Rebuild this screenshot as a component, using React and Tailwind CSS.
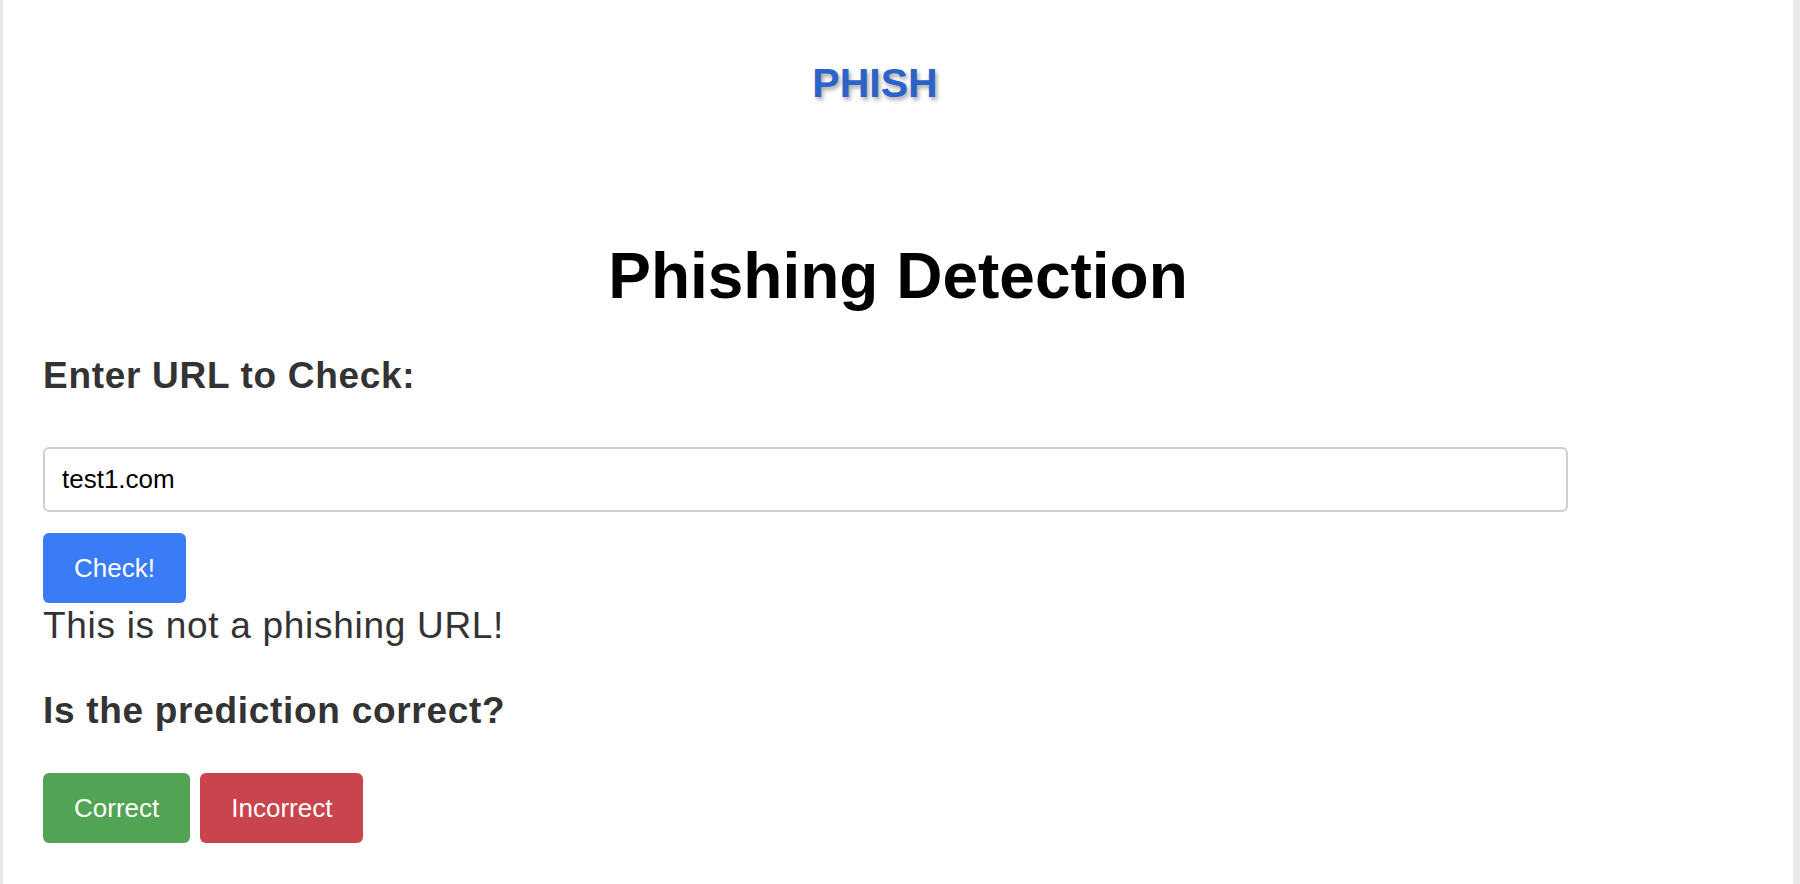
import React, { useState } from 'react';

const App = () => {
  const [url, setUrl] = useState('test1.com');

  return (
    <div className="min-h-screen bg-white border-l-[3px] border-r-[7px] border-[#e9e9e9] font-['Liberation_Sans',Arial,sans-serif]">
      {/* Header */}
      <header className="pt-[59px] flex justify-center">
        <a href="#" className="mr-[46px] text-[41px] leading-[48px] font-bold text-[#2c63c9] [text-shadow:2px_3px_4px_rgba(0,0,0,0.35)]">
          PHISH
        </a>
      </header>

      {/* Main */}
      <main className="px-[40px]">
        <h1 className="mt-[133px] text-center text-[64px] leading-[72px] font-bold text-black">
          Phishing Detection
        </h1>

        <h2 className="mt-[42px] text-[37px] leading-[44px] font-bold tracking-[0.7px] text-[#333]">
          Enter URL to Check:
        </h2>

        <input
          type="text"
          value={url}
          onChange={(e) => setUrl(e.target.value)}
          className="mt-[49px] block w-[1525px] h-[65px] px-[17px] text-[26px] text-black border-2 border-[#d0d0d0] rounded-[6px] outline-none"
        />

        <button className="mt-[21px] block h-[70px] px-[31px] text-[26px] text-white bg-[#3a7cf7] rounded-[6px]">
          Check!
        </button>

        <p className="mt-[1px] text-[37px] leading-[44px] tracking-[0.7px] text-[#333]">
          This is not a phishing URL!
        </p>

        <h2 className="mt-[41px] text-[37px] leading-[44px] font-bold tracking-[0.7px] text-[#333]">
          Is the prediction correct?
        </h2>

        <div className="mt-[40px] flex gap-[10px]">
          <button className="h-[70px] px-[31px] text-[26px] text-white bg-[#50a453] rounded-[6px]">
            Correct
          </button>
          <button className="h-[70px] px-[31px] text-[26px] text-white bg-[#c9444c] rounded-[6px]">
            Incorrect
          </button>
        </div>
      </main>
    </div>
  );
};

export default App;
